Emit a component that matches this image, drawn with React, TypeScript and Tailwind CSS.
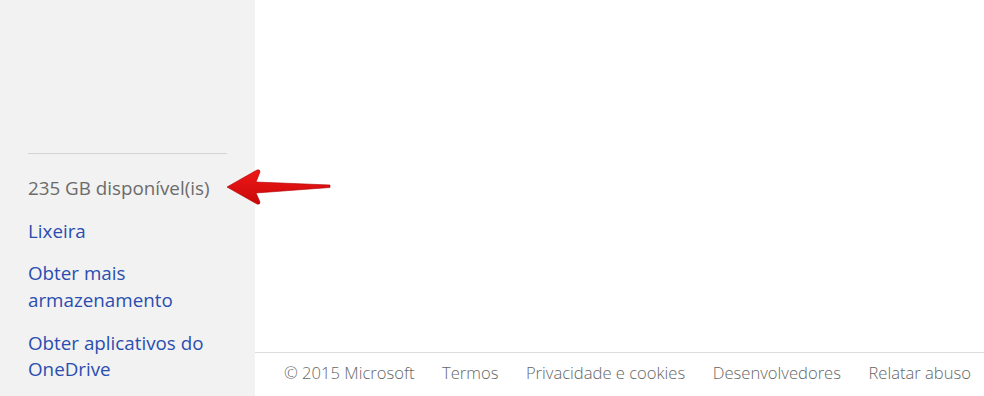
import React from 'react';

const links = ['Termos', 'Privacidade e cookies', 'Desenvolvedores', 'Relatar abuso'];

const RedArrow: React.FC = () => (
  <svg className="absolute left-[224px] top-[166px]" width="110" height="42" viewBox="0 0 110 42">
    <defs>
      <linearGradient id="arrowFill" x1="0" y1="0" x2="0" y2="1">
        <stop offset="0" stopColor="#f01818" />
        <stop offset="1" stopColor="#c80808" />
      </linearGradient>
    </defs>
    <path
      d="M3 21 L33 4 Q36 3 36 6 L32 16 L106 19 L106 21.5 L32 27 L36 36 Q36 39 33 38 Z"
      fill="url(#arrowFill)"
      stroke="#b00000"
      strokeWidth="0.6"
      strokeLinejoin="round"
    />
  </svg>
);

const App: React.FC = () => {
  return (
    <div className="relative flex h-[396px] w-[984px] overflow-hidden bg-white font-['Open_Sans',sans-serif]">
      <aside className="flex w-[255px] shrink-0 flex-col bg-[#f2f2f2] px-[28px] pt-[153px]">
        <div className="h-px w-[199px] bg-[#d4d4d4]" />
        <p className="mt-[22px] text-[18.8px] leading-[24px] text-[#6b6b6b]">235 GB disponível(is)</p>
        <a className="mt-[19px] text-[18.8px] leading-[24px] text-[#2a4db0]">Lixeira</a>
        <a className="mt-[17px] w-[199px] text-[18.8px] leading-[27px] text-[#2a4db0]">Obter mais armazenamento</a>
        <a className="mt-[16px] w-[199px] text-[18.8px] leading-[26px] text-[#2a4db0]">Obter aplicativos do OneDrive</a>
      </aside>
      <main className="flex flex-1 flex-col">
        <div className="flex-1" />
        <footer className="flex h-[44px] items-center gap-[27.5px] border-t border-[#dcdcdc] pb-[3px] pl-[29px] text-[16.6px] font-light text-[#666666]">
          <span>© 2015 Microsoft</span>
          {links.map((l) => (
            <a key={l}>{l}</a>
          ))}
        </footer>
      </main>
      <RedArrow />
    </div>
  );
};

export default App;
